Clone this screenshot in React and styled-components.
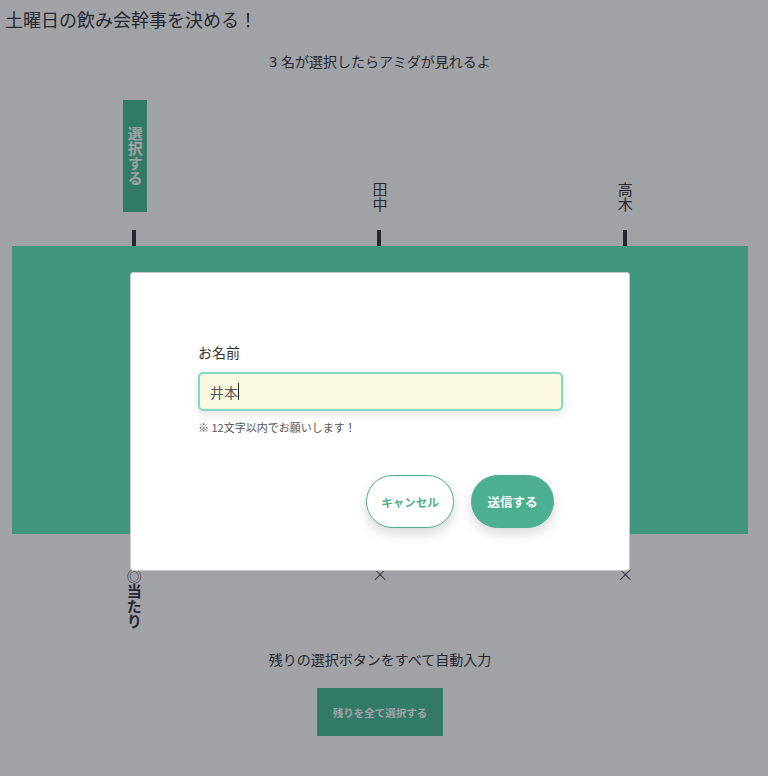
import React from 'react';
import styled, { createGlobalStyle } from 'styled-components';

const GlobalStyle = createGlobalStyle`
  body {
    margin: 0;
    background: #ffffff;
    font-family: 'Noto Sans', 'Noto Sans CJK JP', sans-serif;
    color: #32343f;
  }
`;

const Page = styled.div`
  padding: 0 20px 40px 12px;
`;

const Title = styled.h1`
  margin: 0 0 0 -7px;
  padding-top: 7px;
  font-size: 18px;
  font-weight: 400;
  line-height: 26px;
`;

const Note = styled.p`
  margin: 19px 0 0 0;
  text-align: center;
  font-size: 14px;
  line-height: 20px;
`;

const Columns = styled.div`
  display: grid;
  grid-template-columns: repeat(3, 1fr);
  margin-top: ${p => p.gap || 0}px;
`;

const Head = styled.div`
  display: flex;
  flex-direction: column;
  align-items: center;
  justify-content: flex-end;
  height: 146px;
`;

const Vertical = styled.div`
  writing-mode: vertical-rl;
  text-orientation: upright;
  font-family: 'Noto Sans CJK JP', sans-serif;
  font-size: 15px;
  line-height: 15px;
  font-weight: ${p => (p.bold ? 700 : 400)};
`;

const Mark = styled.span`
  font-weight: 300;
`;

const PickButton = styled.button`
  writing-mode: vertical-rl;
  text-orientation: upright;
  width: 24px;
  height: 112px;
  padding: 0;
  border: 0;
  background: #49be9b;
  color: #ffffff;
  font-family: inherit;
  font-size: 15px;
  font-weight: 700;
  line-height: 24px;
  display: flex;
  align-items: center;
  justify-content: center;
  margin-bottom: 18px;
`;

const Name = styled(Vertical)`
  margin-bottom: 18px;
`;

const Stick = styled.div`
  width: 4px;
  height: 16px;
  background: #32343f;
  margin-left: -1px;
`;

const Board = styled.div`
  height: 288px;
  background: #5deabc;
`;

const Foot = styled.div`
  display: flex;
  flex-direction: column;
  align-items: center;
  padding-top: ${p => (p.shift ? 35 : 32)}px;
  height: 64px;
  margin-left: ${p => (p.shift ? '-1px' : 0)};
`;

const Cross = styled.span`
  font-family: 'Noto Sans CJK JP', sans-serif;
  font-size: 17px;
  line-height: 16px;
  font-weight: 300;
`;

const AutoText = styled.p`
  margin: 17px 0 0 0;
  text-align: center;
  font-size: 14px;
  line-height: 20px;
`;

const AutoButton = styled.button`
  display: block;
  margin: 18px auto 0 auto;
  width: 126px;
  height: 48px;
  border: 0;
  background: #49be9b;
  color: #ffffff;
  font-family: inherit;
  font-size: 10.5px;
  font-weight: 700;
`;

const Overlay = styled.div`
  position: fixed;
  inset: 0;
  background: rgba(20, 22, 30, 0.4);
  display: flex;
  justify-content: center;
  align-items: flex-start;
  padding: 272px 8px 0 0;
`;

const Modal = styled.div`
  width: 500px;
  height: 299px;
  background: #ffffff;
  border: 1px solid #c9cacc;
  border-radius: 3px;
  padding: 70px 66px 0 67px;
  box-sizing: border-box;
`;

const Label = styled.label`
  display: block;
  font-size: 14px;
  line-height: 20px;
  color: #333;
`;

const Input = styled.div`
  margin-top: 9px;
  height: 39px;
  box-sizing: border-box;
  border: 2px solid #80dac4;
  border-radius: 5px;
  background: #fbf8e0;
  box-shadow: 0 3px 10px rgba(0, 0, 0, 0.12);
  padding: 0 10px;
  display: flex;
  align-items: center;
  font-size: 14px;
  color: #555;
`;

const Caret = styled.span`
  display: inline-block;
  width: 1px;
  height: 17px;
  background: #222;
`;

const Hint = styled.p`
  margin: 8px 0 0 0;
  font-family: 'Noto Sans CJK JP', sans-serif;
  font-size: 11px;
  line-height: 16px;
  color: #555;
`;

const Actions = styled.div`
  display: flex;
  justify-content: flex-end;
  gap: 17px;
  margin-top: 40px;
  padding-right: 9px;
`;

const Pill = styled.button`
  height: 53px;
  width: ${p => p.width}px;
  border-radius: 27px;
  border: 1px solid #4caf91;
  background: ${p => (p.primary ? '#4caf91' : '#ffffff')};
  color: ${p => (p.primary ? '#ffffff' : '#4caf91')};
  font-family: inherit;
  font-size: ${p => (p.primary ? 12.5 : 11.5)}px;
  font-weight: 700;
  box-shadow: 0 6px 12px rgba(0, 0, 0, 0.15);
`;

const players = [
  { name: null, result: '当たり' },
  { name: '田中', result: '×' },
  { name: '高木', result: '×' },
];

export default function App() {
  return (
    <>
      <GlobalStyle />
      <Page>
        <Title>土曜日の飲み会幹事を決める！</Title>
        <Note>3 名が選択したらアミダが見れるよ</Note>
        <Columns gap={28}>
          {players.map((p, i) => (
            <Head key={i}>
              {p.name ? <Name>{p.name}</Name> : <PickButton>選択する</PickButton>}
              <Stick />
            </Head>
          ))}
        </Columns>
        <Board />
        <Columns>
          {players.map((p, i) =>
            p.name ? (
              <Foot key={i}>
                <Cross>×</Cross>
              </Foot>
            ) : (
              <Foot key={i} shift>
                <Vertical bold>
                  <Mark>◎</Mark>
                  {p.result}
                </Vertical>
              </Foot>
            )
          )}
        </Columns>
        <AutoText>残りの選択ボタンをすべて自動入力</AutoText>
        <AutoButton>残りを全て選択する</AutoButton>
      </Page>
      <Overlay>
        <Modal>
          <Label>お名前</Label>
          <Input>
            井本<Caret />
          </Input>
          <Hint>※ 12文字以内でお願いします！</Hint>
          <Actions>
            <Pill width={88}>キャンセル</Pill>
            <Pill width={83} primary>送信する</Pill>
          </Actions>
        </Modal>
      </Overlay>
    </>
  );
}
